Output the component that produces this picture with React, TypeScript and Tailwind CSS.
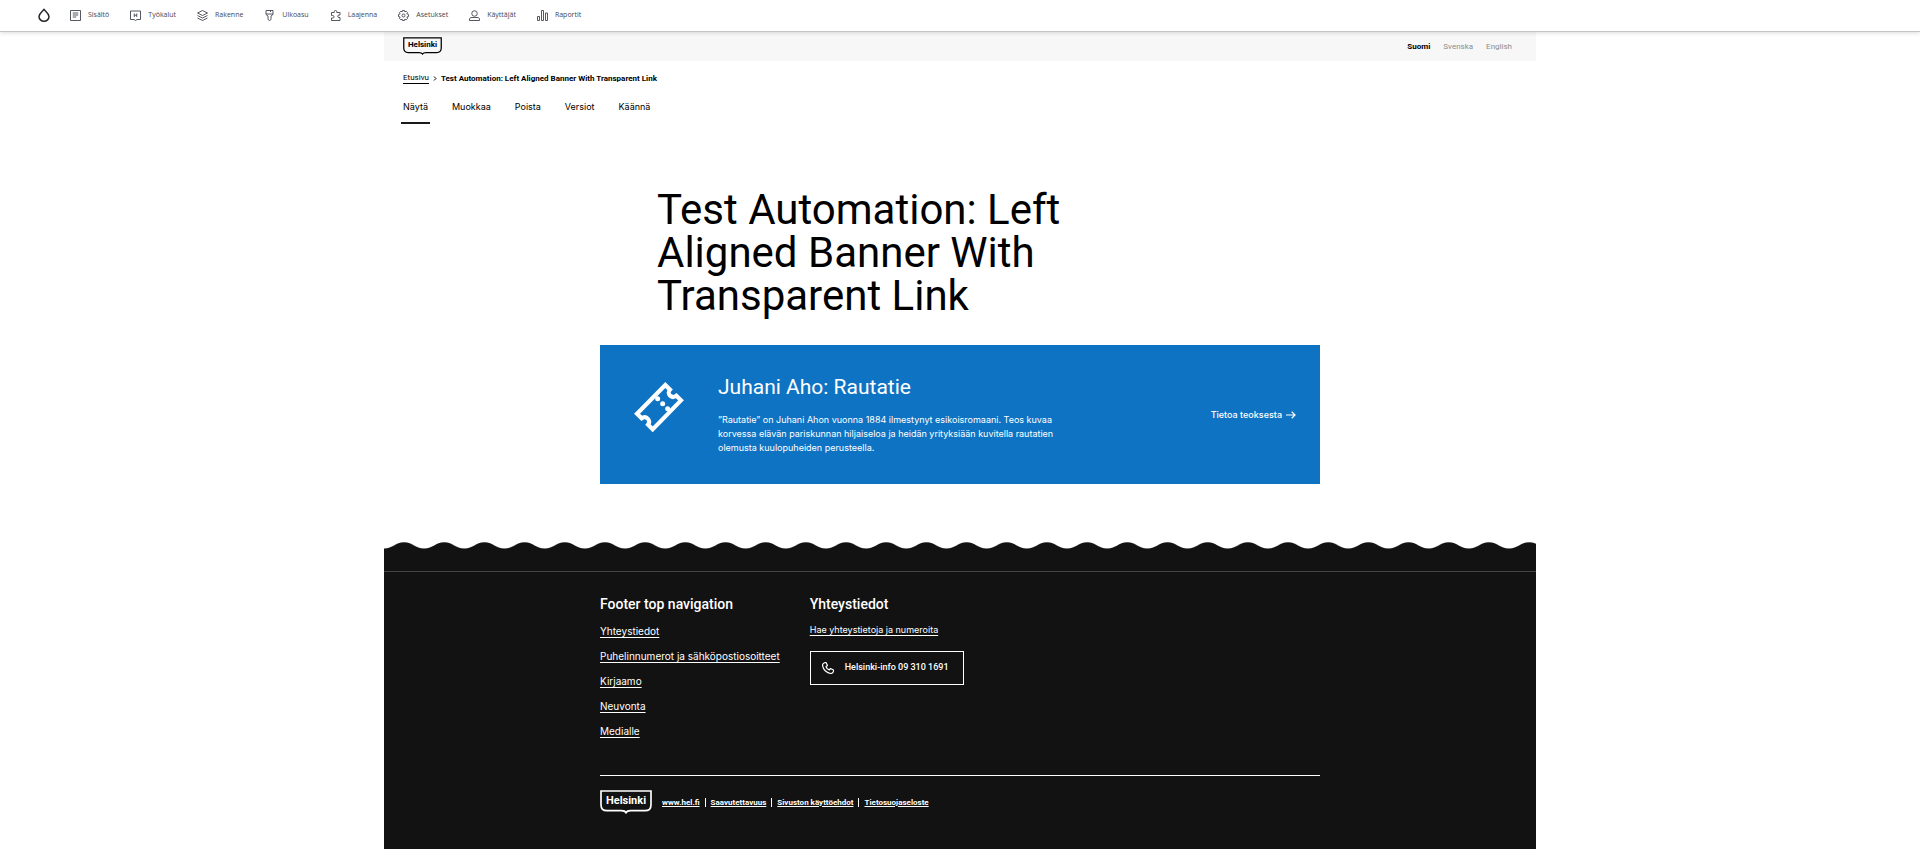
import React from "react";

type IconProps = { children: React.ReactNode };

function ToolbarIcon({ children }: IconProps) {
  return (
    <svg
      viewBox="0 0 22 22"
      className="size-[11px] shrink-0"
      fill="none"
      stroke="currentColor"
      strokeWidth="1.800"
      aria-hidden="true"
    >
      {children}
    </svg>
  );
}

const toolbarItems = [
  {
    label: "Sisältö",
    icon: <path d="M1 1h20v20H1zM5.500 6h11M5.500 10h11M5.500 14h7" />,
  },
  {
    label: "Työkalut",
    icon: <path d="M1 2h20v17h-7l-3 2-3-2H1zM8.500 7v7M13.500 7v7M8.500 10.500h5" />,
  },
  {
    label: "Rakenne",
    icon: (
      <path d="M11 1l10 5-10 5L1 6zM1 11l10 5 10-5M1 16l10 5 10-5" strokeLinejoin="round" />
    ),
  },
  {
    label: "Ulkoasu",
    icon: <path d="M4 1h14v8l-4 3v7l-3 2-3-2v-7L4 9zM4 8h14M13 1v3" strokeLinejoin="round" />,
  },
  {
    label: "Laajenna",
    icon: (
      <path
        d="M3 5h5.500V3.500a2.500 2.500 0 0 1 5 0V5H20v5h-2a2.500 2.500 0 0 0 0 5h2v6H3v-5h2.500a2.500 2.500 0 0 0 0-5H3z"
        strokeLinejoin="round"
      />
    ),
  },
  {
    label: "Asetukset",
    icon: (
      <>
        <path
          d="M9 1h4l.7 2.800 2.500-1.500 3 3-1.500 2.400L21 9v4l-3.300 1 1.500 2.700-3 3-2.500-1.500L13 21H9l-.7-2.800-2.500 1.500-3-3L4.300 14 1 13V9l3.300-1.300-1.500-2.400 3-3 2.500 1.500z"
          strokeLinejoin="round"
        />
        <circle cx="11" cy="11" r="3" />
      </>
    ),
  },
  {
    label: "Käyttäjät",
    icon: (
      <>
        <circle cx="11" cy="7" r="5.500" />
        <path d="M1 21v-3c0-2 2-3 5-3h10c3 0 5 1 5 3v3z" />
      </>
    ),
  },
  {
    label: "Raportit",
    icon: <path d="M1 13h4v8H1zM9 1h4v20H9zM17 6h4v15h-4z" />,
  },
];

const tabs = ["Näytä", "Muokkaa", "Poista", "Versiot", "Käännä"];

const footerLinks = [
  "Yhteystiedot",
  "Puhelinnumerot ja sähköpostiosoitteet",
  "Kirjaamo",
  "Neuvonta",
  "Medialle",
];

const legalLinks = ["www.hel.fi", "Saavutettavuus", "Sivuston käyttöehdot", "Tietosuojaseloste"];

function Toolbar() {
  return (
    <nav
      aria-label="Hallinta"
      className="relative z-10 flex h-8 items-center border-b border-[#c4c4c4] bg-white pb-px pl-[38px] font-['Open_Sans',sans-serif] text-[7px] text-[#44464f] shadow-[0_1px_4px_rgba(0,0,0,0.14)]"
    >
      <a href="#" aria-label="Etusivu" className="mr-[20px] text-[#232429]">
        <svg viewBox="0 0 24 28" className="h-[14px] w-[12px]" fill="none" stroke="currentColor" strokeWidth="3">
          <path
            d="M12 2.500C10 6.500 2 10.500 2 17a10 9.500 0 0 0 20 0C22 10.500 14 6.500 12 2.500z"
            strokeLinejoin="round"
          />
        </svg>
      </a>
      <ul className="flex items-center gap-[21px]">
        {toolbarItems.map((item) => (
          <li key={item.label}>
            <a href="#" className="flex items-center gap-[7px] whitespace-nowrap">
              <ToolbarIcon>{item.icon}</ToolbarIcon>
              {item.label}
            </a>
          </li>
        ))}
      </ul>
    </nav>
  );
}

function Logo({ large = false }: { large?: boolean }) {
  return (
    <a
      href="#"
      className={
        large
          ? "grid h-[24px] w-[52px] shrink-0 justify-items-center text-[11px] leading-[21px] font-bold text-white"
          : "grid h-[18px] w-[39px] shrink-0 justify-items-center text-[8px] leading-[16px] font-bold text-black"
      }
    >
      <svg
        viewBox="0 0 78 36"
        className="col-start-1 row-start-1 h-full w-full"
        fill="none"
        stroke="currentColor"
        strokeWidth="2.500"
        aria-hidden="true"
      >
        <path d="M1.500 1.500h75V22c0 6-4 9-9 9H46c-4 0-6 1-7 3-1-2-3-3-7-3H10.500c-5 0-9-3-9-9z" />
      </svg>
      <span className="col-start-1 row-start-1">Helsinki</span>
    </a>
  );
}

function TicketIcon() {
  return (
    <svg viewBox="0 0 150 150" className="size-[50px] shrink-0" aria-hidden="true">
      <path
        d="M94 9l14 14C97 35 112 52 127 41l14 14-85 87-14-14C52 115 36 99 23 109L9 95z"
        fill="none"
        stroke="currentColor"
        strokeWidth="12.500"
      />
      <g fill="currentColor">
        <circle cx="71" cy="50" r="7.500" />
        <circle cx="86" cy="65" r="7.500" />
        <circle cx="101" cy="80" r="7.500" />
      </g>
    </svg>
  );
}

function Wave() {
  return (
    <svg className="block h-[8px] w-full text-[#121212]" aria-hidden="true">
      <defs>
        <pattern id="wave" width="40.180" height="8" patternUnits="userSpaceOnUse">
          <path
            d="M0 6.600C9 6.600 11 .3 20.090 .3S31 6.600 40.180 6.600V8H0z"
            fill="currentColor"
          />
        </pattern>
      </defs>
      <rect width="100%" height="8" fill="url(#wave)" />
    </svg>
  );
}

export default function App() {
  return (
    <div className="min-h-screen bg-white font-[Roboto,sans-serif] text-black">
      <Toolbar />
      <div className="mx-auto flex max-w-[1152px] flex-col">
        <header className="flex items-start justify-between bg-[#f7f7f7] pt-[5px] pr-6 pb-[6px] pl-[19px]">
          <Logo />
          <ul className="flex gap-[13px] pt-[5px] text-[8px] leading-[10px] text-[#8c8c8c]">
            <li>
              <a href="#" className="font-bold text-black">Suomi</a>
            </li>
            <li>
              <a href="#">Svenska</a>
            </li>
            <li>
              <a href="#">English</a>
            </li>
          </ul>
        </header>

        <nav aria-label="Murupolku" className="flex items-center gap-1 px-[19px] pt-3 text-[8px] leading-[10px]">
          <a href="#" className="border-b border-black">Etusivu</a>
          <svg viewBox="0 0 8 10" className="h-[5px] w-1" fill="none" stroke="currentColor" strokeWidth="2" aria-hidden="true">
            <path d="M2 1l4 4-4 4" />
          </svg>
          <span className="font-bold">Test Automation: Left Aligned Banner With Transparent Link</span>
        </nav>

        <nav aria-label="Välilehdet" className="pt-[13px] pl-[17px]">
          <ul className="flex gap-5 font-[Inter,sans-serif] text-[9px] leading-[20px]">
            {tabs.map((tab, i) => (
              <li key={tab}>
                <a
                  href="#"
                  className={
                    i === 0
                      ? "block border-b-2 border-[#1a1a1a] px-[2px] pb-[5px]"
                      : "block border-b-2 border-transparent px-[2px] pb-[5px]"
                  }
                >
                  {tab}
                </a>
              </li>
            ))}
          </ul>
        </nav>

        <main className="mx-auto w-full max-w-[720px] pt-16 pb-[58px]">
          <h1 className="ml-[57px] max-w-[440px] text-[42px] leading-[43px]">
            Test Automation: Left Aligned Banner With Transparent Link
          </h1>

          <section className="mt-[28px] flex bg-[#0f73c3] pt-[29px] pr-[24px] pb-[29px] pl-[34px] text-white">
            <div className="pt-2">
              <TicketIcon />
            </div>
            <div className="ml-[34px] w-[346px]">
              <h2 className="text-[21px] leading-[26px]">Juhani Aho: Rautatie</h2>
              <p className="mt-[13px] font-[Inter,sans-serif] text-[9px] leading-[14px]">
                ”Rautatie” on Juhani Ahon vuonna 1884 ilmestynyt esikoisromaani. Teos kuvaa korvessa
                elävän pariskunnan hiljaiseloa ja heidän yrityksiään kuvitella rautatien olemusta
                kuulopuheiden perusteella.
              </p>
            </div>
            <a
              href="#"
              className="ml-auto flex items-center gap-1 self-center font-[Inter,sans-serif] text-[9px] font-medium"
            >
              Tietoa teoksesta
              <svg viewBox="0 0 20 16" className="h-2 w-[10px]" fill="none" stroke="currentColor" strokeWidth="2.400" aria-hidden="true">
                <path d="M0 8h18M11.500 1.500L18 8l-6.500 6.500" />
              </svg>
            </a>
          </section>
        </main>

        <footer>
          <Wave />
          <div className="bg-[#121212] pt-[21px]">
            <div className="border-t border-[#444]">
              <div className="mx-auto max-w-[720px] pt-[22px] pb-12 text-white">
                <div className="flex gap-[30px]">
                  <div>
                    <h2 className="text-[14px] leading-[20px] font-medium">Footer top navigation</h2>
                    <ul className="pt-[5px] font-[Inter,sans-serif] text-[10px] leading-[25px]">
                      {footerLinks.map((link) => (
                        <li key={link}>
                          <a href="#" className="underline underline-offset-2">{link}</a>
                        </li>
                      ))}
                    </ul>
                  </div>
                  <div>
                    <h2 className="text-[14px] leading-[20px] font-medium">Yhteystiedot</h2>
                    <p className="pt-[10px] font-[Inter,sans-serif] text-[9px] leading-[12px]">
                      <a href="#" className="underline underline-offset-2">Hae yhteystietoja ja numeroita</a>
                    </p>
                    <a
                      href="#"
                      className="mt-[15px] flex h-[34px] w-[154px] items-center gap-[11px] border border-white pl-[11px] text-[9px] font-medium"
                    >
                      <svg viewBox="0 0 24 24" className="size-[12px]" fill="none" stroke="currentColor" strokeWidth="2.400" strokeLinejoin="round" aria-hidden="true">
                        <path d="M5 1.500L8 1l3 6-3 2.500c1 3 3.500 5.500 6.500 6.500l2.500-3 6 3v3c-1 2.500-3 4-5.500 4C9 22 2 15 1 6.500 1 4 2.500 2.500 5 1.500z" />
                      </svg>
                      Helsinki-info 09 310 1691
                    </a>
                  </div>
                </div>
                <div className="mt-[31px] flex items-start border-t border-white pt-[14px]">
                  <Logo large />
                  <ul className="ml-[10px] flex pt-2 text-[8px] leading-[9px] font-bold">
                    {legalLinks.map((link, i) => (
                      <li
                        key={link}
                        className={i === 0 ? "" : "ml-[5px] border-l border-white pl-[5px]"}
                      >
                        <a href="#" className="underline underline-offset-1">{link}</a>
                      </li>
                    ))}
                  </ul>
                </div>
              </div>
            </div>
          </div>
        </footer>
      </div>
    </div>
  );
}
